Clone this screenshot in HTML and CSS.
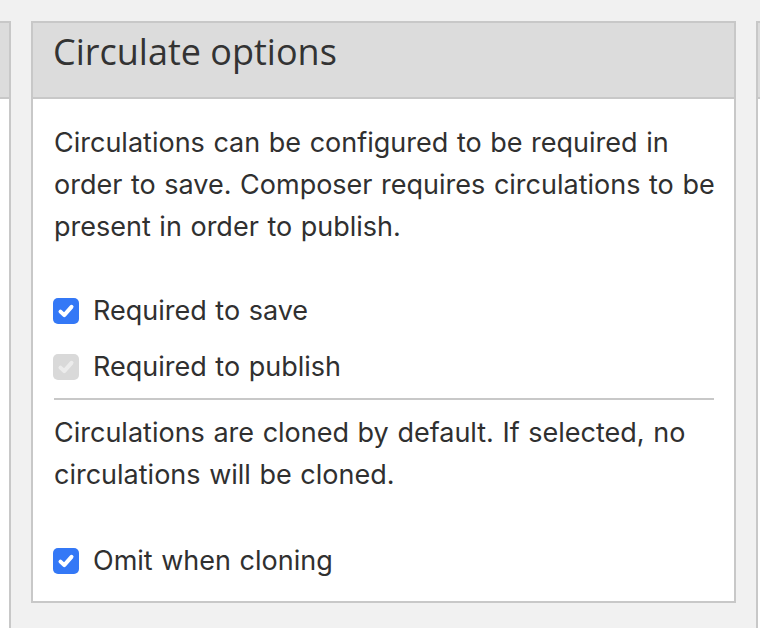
FILE: index.html
```html
<!DOCTYPE html>
<html lang="en">
<head>
    <meta charset="UTF-8">
    <meta name="viewport" content="width=device-width, initial-scale=1.0">
    <title>Circulate options</title>
    <link rel="stylesheet" href="styles.css">
</head>
<body>
    <div class="columns">
        <section class="panel panel-side">
            <div class="panel-header"></div>
        </section>

        <section class="panel panel-main">
            <div class="panel-header">
                <h2>Circulate options</h2>
            </div>
            <div class="panel-body">
                <p>Circulations can be configured to be required in order to save. Composer requires circulations to be present in order to publish.</p>

                <div class="option-group">
                    <label class="option">
                        <span class="check checked">
                            <svg viewBox="0 0 16 16"><path d="M3.6 8.5 6.6 11.3 12.4 4.7"/></svg>
                        </span>
                        Required to save
                    </label>
                    <label class="option">
                        <span class="check disabled">
                            <svg viewBox="0 0 16 16"><path d="M3.6 8.5 6.6 11.3 12.4 4.7"/></svg>
                        </span>
                        Required to publish
                    </label>
                </div>

                <hr class="divider">

                <p>Circulations are cloned by default. If selected, no circulations will be cloned.</p>

                <div class="option-group last">
                    <label class="option">
                        <span class="check checked">
                            <svg viewBox="0 0 16 16"><path d="M3.6 8.5 6.6 11.3 12.4 4.7"/></svg>
                        </span>
                        Omit when cloning
                    </label>
                </div>
            </div>
        </section>

        <section class="panel panel-side">
            <div class="panel-header"></div>
        </section>
    </div>
</body>
</html>
```

FILE: styles.css
```css
/* Global Styles */
body {
    font-family: 'Inter', 'Liberation Sans', sans-serif;
    margin: 0;
    padding: 0;
    background-color: #f1f1f1;
    color: #303030;
    overflow: hidden;
}

.columns {
    display: flex;
    align-items: flex-start;
    gap: 20px;
    padding-top: 21px;
    margin-left: -289px;
}

/* Panels */
.panel {
    flex: none;
    box-sizing: border-box;
    background-color: #fff;
    border: 2px solid #c8c8c8;
}

.panel-side {
    width: 300px;
    height: 700px;
}

.panel-main {
    width: 705px;
}

.panel-header {
    height: 74px;
    background-color: #dcdcdc;
    border-bottom: 2px solid #c8c8c8;
}

.panel-header h2 {
    margin: 0;
    padding: 5px 0 0 20px;
    font-family: 'Open Sans', sans-serif;
    font-size: 36px;
    font-weight: 400;
    line-height: 48px;
    color: #333;
}

.panel-body {
    padding: 23px 20px 12px 20px;
    font-size: 27px;
    line-height: 42px;
    word-spacing: 1px;
}

.panel-body p {
    margin: 0 -12px 0 1px;
}

/* Checkbox rows */
.option-group {
    margin-top: 35px;
}

.option-group.last {
    margin-top: 37px;
}

.option {
    display: flex;
    align-items: center;
    gap: 14px;
    height: 56px;
}

.check {
    display: flex;
    align-items: center;
    justify-content: center;
    width: 26px;
    height: 26px;
    border-radius: 5px;
}

.check svg {
    width: 20px;
    height: 20px;
    fill: none;
    stroke: #fff;
    stroke-width: 3.2;
    stroke-linecap: round;
    stroke-linejoin: round;
}

.check.checked {
    background-color: #3478f6;
}

.check.disabled {
    background-color: #d9d9d9;
}

.check.disabled svg {
    stroke: #ececec;
}

.divider {
    margin: 3px 0 12px 1px;
    border: none;
    border-top: 2px solid #c8c8c8;
}
```
